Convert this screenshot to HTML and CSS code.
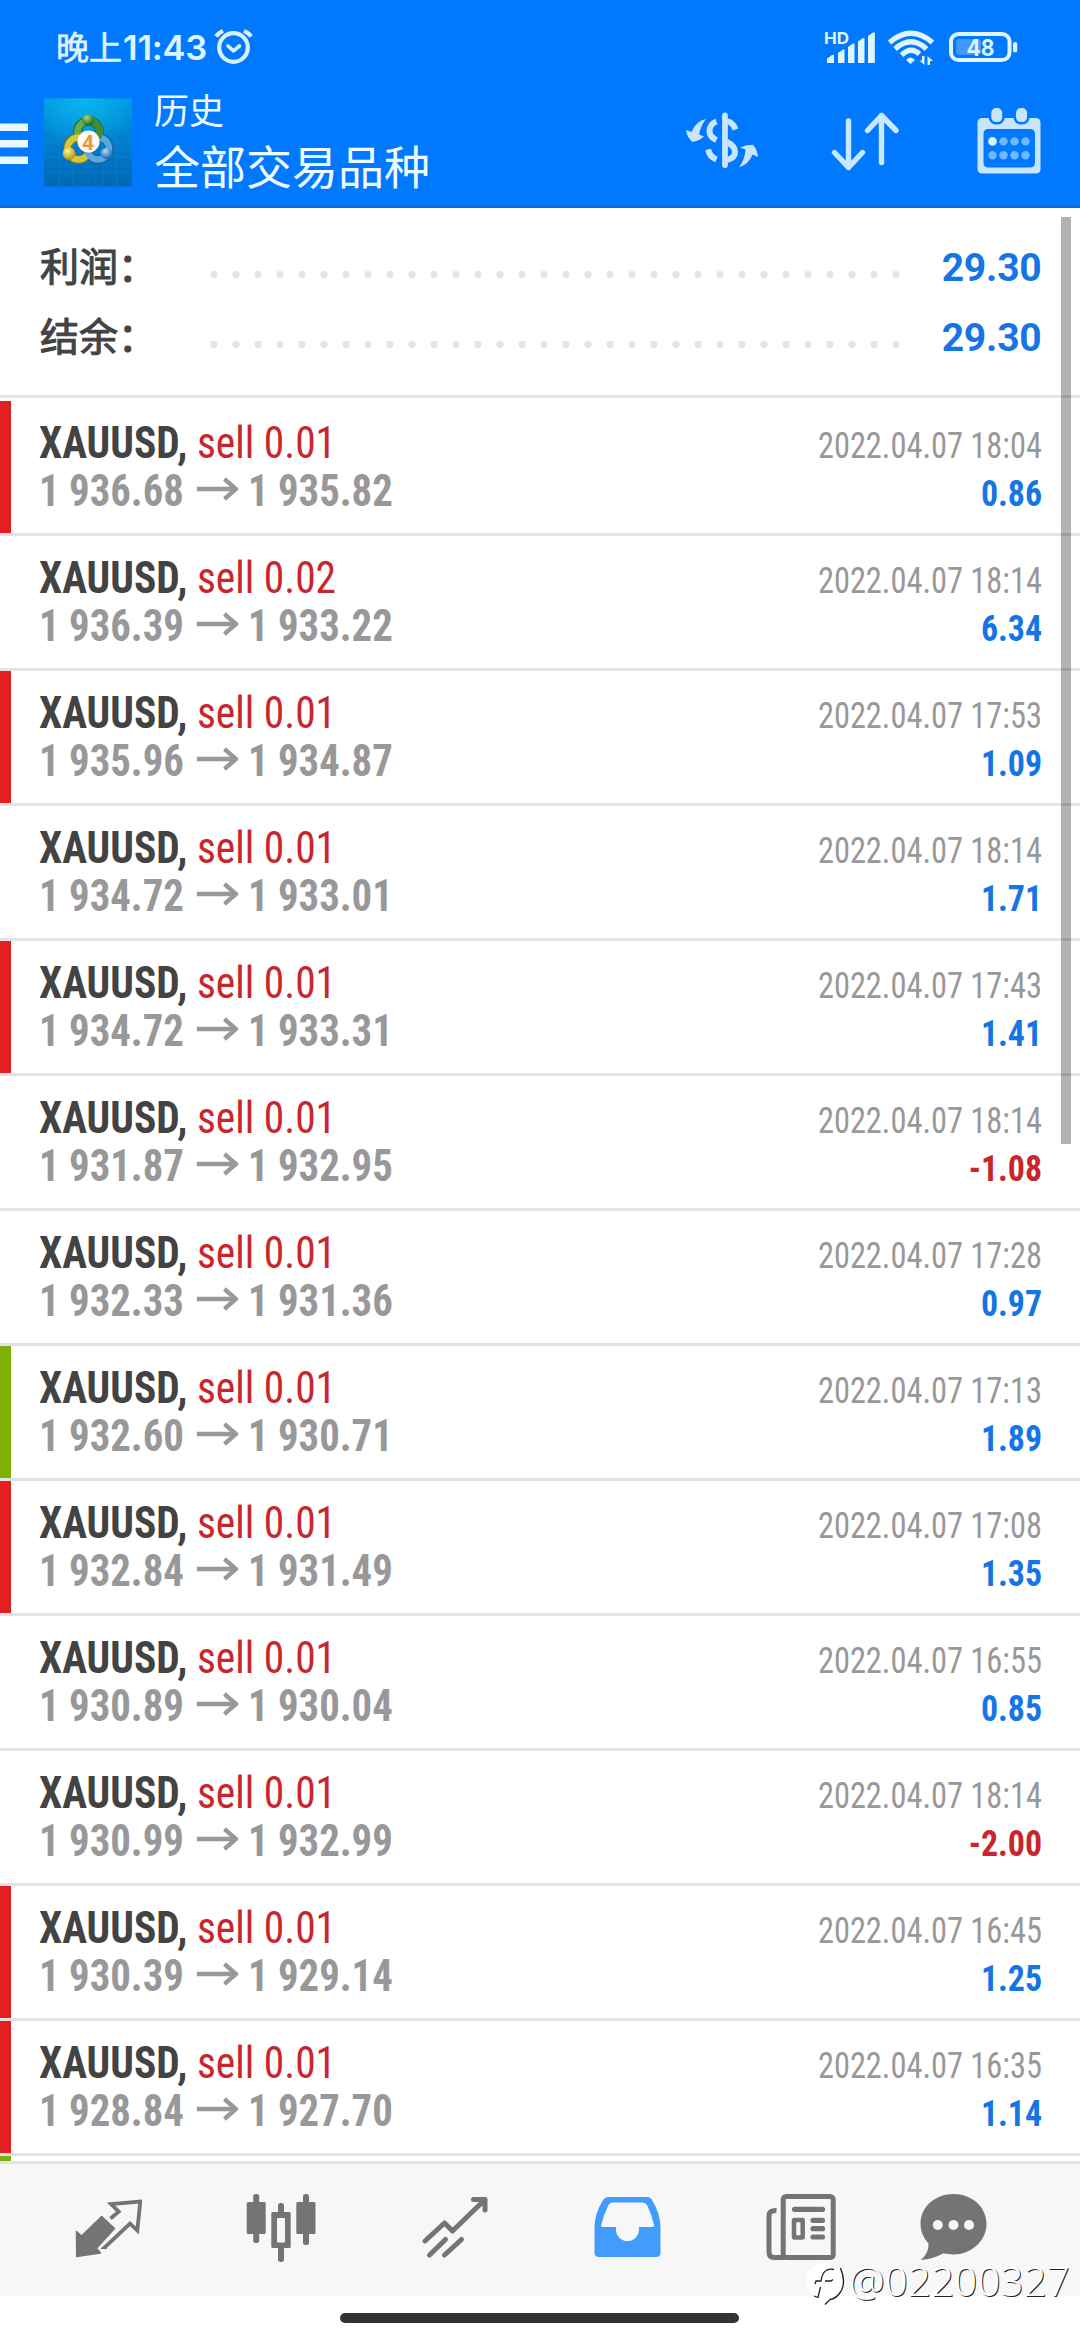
FILE: index.html
```html
<!DOCTYPE html>
<html lang="zh-CN">
<head>
<meta charset="utf-8">
<title>历史</title>
<link rel="stylesheet" href="styles.css">
</head>
<body>
<svg class="defs" width="0" height="0"><symbol id="arrow" viewBox="0 0 45 24"><path d="M0 12H42.500M30 2L42.500 12L30 22" fill="none" stroke="currentColor" stroke-width="4.6"/></symbol></svg>
<header class="header">
  <div class="status">
    <span class="clock">晚上<b>11:43</b></span>
    <svg class="alarm" width="42" height="40" viewBox="213 27 42 40" fill="none" stroke="#d8f1ff" stroke-width="4.2" stroke-linecap="round" stroke-linejoin="round"><circle cx="233.5" cy="47.5" r="14.3"/><path d="M228 46l5.5 4.800l6-4.800" stroke-width="3.600"/><path d="M216 36.500Q218.500 32.800 223 30.800M244 30.800Q248.500 32.800 251.200 36.500" stroke-linecap="butt"/></svg>
    <svg class="signals" width="196" height="40" viewBox="824 27 196 40" fill="#def4ff">
      <text class="hd" x="824" y="43.500" textLength="25" lengthAdjust="spacingAndGlyphs">HD</text>
      <path d="M827 63V58.500L832 55H834V63ZM838 63V53L843 49.500H844.500V63ZM848 63V47L853 43.500H854.500V63ZM858 63V41.500L863 38H864.500V63ZM868 63V36L873 32.500H874.800V63Z"/>
      <g fill="none" stroke="#def4ff" stroke-width="5.200"><path d="M889.500 42.500Q911 24 932.500 42.500"/><path d="M895 49Q911 34.500 926.500 49"/><path d="M901.500 55Q911 46 919.500 54"/></g>
      <path d="M906 60Q910.500 55 915 60L910.500 64ZM924.500 56V65L919.500 60.500H922V56ZM927.500 65V56L933 61H930V65Z"/>
      <rect x="951" y="34" width="58.500" height="26" rx="7.500" fill="none" stroke="#def4ff" stroke-width="4"/>
      <rect x="956" y="39" width="25" height="16" rx="3" fill="#3f97ff"/>
      <rect x="1013" y="42" width="4.200" height="10.500" rx="2"/>
      <text class="battery" x="966.500" y="56" textLength="28" lengthAdjust="spacingAndGlyphs">48</text>
    </svg>
  </div>
  <div class="toolbar">
    <svg width="28" height="114" viewBox="0 94 28 114" fill="#e8f8ff"><path d="M0 123.500H28V131H0ZM0 140H28V147.500H0ZM0 156.500H28V164H0Z"/></svg>
    <svg class="logo" width="88" height="114" viewBox="44 94 88 114">
      <defs><linearGradient id="sky" x1="0" y1="0" x2="0" y2="1"><stop offset="0" stop-color="#0098df"/><stop offset=".45" stop-color="#0080cf"/><stop offset="1" stop-color="#0067b8"/></linearGradient>
      <radialGradient id="glow" cx=".45" cy="0" r=".6"><stop offset="0" stop-color="#08b6ef"/><stop offset="1" stop-color="#08b6ef" stop-opacity="0"/></radialGradient>
      <radialGradient id="g" cx=".4" cy=".3" r=".7"><stop offset="0" stop-color="#a6dc70"/><stop offset="1" stop-color="#16681c"/></radialGradient>
      <radialGradient id="y" cx=".4" cy=".3" r=".7"><stop offset="0" stop-color="#fff29a"/><stop offset="1" stop-color="#b29208"/></radialGradient>
      <radialGradient id="b" cx=".4" cy=".3" r=".7"><stop offset="0" stop-color="#a6dcff"/><stop offset="1" stop-color="#1766ae"/></radialGradient></defs>
      <path fill="url(#sky)" d="M44 98.500H132V186.500H44Z"/><path fill="url(#glow)" d="M44 98.500H132V186.500H44Z"/>
      <path d="M59 98V187M73 98V187M88 98V187M103 98V187M117 98V187M44 113H132M44 128H132M44 143H132M44 157H132M44 172H132" stroke="#35a5e0" stroke-opacity=".18"/>
      <g fill="none"><circle cx="88.500" cy="132" r="11" stroke="#2c6d36" stroke-width="9"/><circle cx="78.500" cy="148.500" r="11" stroke="#6f7420" stroke-width="9"/><circle cx="98" cy="148.500" r="11" stroke="#1f5f94" stroke-width="9"/>
      <circle cx="88.500" cy="132" r="11" stroke="#62b24b" stroke-width="6.500"/><circle cx="78.500" cy="148.500" r="11" stroke="#d1c840" stroke-width="6.500"/><circle cx="98" cy="148.500" r="11" stroke="#58a9df" stroke-width="6.500"/><path d="M88.500 132m0-11a11 11 0 0 1 9.500 16.500" stroke="#3c8f35" stroke-width="6.500"/></g>
      <circle cx="88" cy="120" r="5.800" fill="url(#g)"/><circle cx="69" cy="153.500" r="6.300" fill="url(#y)"/><circle cx="106.500" cy="153.500" r="5.800" fill="url(#b)"/>
      <circle cx="88.500" cy="141.500" r="11" fill="#fff8f5"/><text class="four" x="88" y="149.500" text-anchor="middle">4</text>
    </svg>
    <div class="titles"><div class="sub">历史</div><div class="title">全部交易品种</div></div>
    <svg class="act1" width="76" height="114" viewBox="684 94 76 114" fill="#c9e4fd">
      <path d="M725 115.500V165" stroke="#c9e4fd" stroke-width="5.800" stroke-linecap="round"/>
      <path d="M716.500 121.500Q709.500 124 709.500 131Q709.500 137 716.500 140M727 121Q733.500 123 735.500 129.500M708 149.500Q709.500 156.500 716.500 159.500M727 142Q735 146 735 152Q735 158 727 160" fill="none" stroke="#c9e4fd" stroke-width="6"/>
      <path d="M686 130L691.500 132Q696 121 706 119Q700.500 126 699 134.500L704 136.500Q699 141 692.500 142Q687 137.500 686 130ZM740 147.500Q746 144.500 753 144.700Q757.500 150 758 157L752.500 154.500Q749 164 739 167.500Q745 159 745.500 149.500Z"/>
    </svg>
    <svg class="act2" width="70" height="114" viewBox="830 94 70 114" fill="none" stroke="#c9e8ff" stroke-width="5.400" stroke-linecap="round" stroke-linejoin="round"><path d="M848.500 121V167.500M834.500 152.500L848.500 167.500L862.500 152.500M881.500 162.500V115.500M867.500 130.500L881.500 115.500L896 130.500"/></svg>
    <svg class="act3" width="64" height="114" viewBox="976.500 94 64 114" fill="#c9e4fd">
      <path fill-rule="evenodd" d="M982 118H1035Q1040 118 1040 123V169Q1040 173.500 1035 173.500H982Q977 173.500 977 169V123Q977 118 982 118ZM988 129Q983 129 983 134V162.500Q983 167.500 988 167.500H1029Q1034.500 167.500 1034.500 162.500V134Q1034.500 129 1029 129Z"/>
      <g stroke="#0079ff" stroke-width="2.500"><rect x="989.500" y="106.800" width="13.500" height="16.500" rx="6"/><rect x="1014.300" y="106.800" width="13.500" height="16.500" rx="6"/></g>
      <circle cx="992" cy="141.400" r="4.300" fill="#d9f3ff"/><g fill="#70b8ff"><circle cx="1003" cy="141.400" r="4.200"/><circle cx="1014" cy="141.400" r="4.200"/><circle cx="1025" cy="141.400" r="4.200"/><circle cx="992" cy="155.300" r="4.200"/><circle cx="1003" cy="155.300" r="4.200"/><circle cx="1014" cy="155.300" r="4.200"/><circle cx="1025" cy="155.300" r="4.200"/></g>
    </svg>
  </div>
</header>
<main class="content">
  <section class="summary">
    <div class="total"><span class="label">利润：</span><i class="dots"></i><b>29.30</b></div>
    <div class="total"><span class="label">结余：</span><i class="dots"></i><b>29.30</b></div>
  </section>
  <section class="deals">
    <article class="deal sl"><div><p><b>XAUUSD,</b> <span class="side">sell 0.01</span></p><p class="price">1 936.68<svg><use href="#arrow"/></svg>1 935.82</p></div><div class="right"><time>2022.04.07 18:04</time><b>0.86</b></div></article>
    <article class="deal"><div><p><b>XAUUSD,</b> <span class="side">sell 0.02</span></p><p class="price">1 936.39<svg><use href="#arrow"/></svg>1 933.22</p></div><div class="right"><time>2022.04.07 18:14</time><b>6.34</b></div></article>
    <article class="deal sl"><div><p><b>XAUUSD,</b> <span class="side">sell 0.01</span></p><p class="price">1 935.96<svg><use href="#arrow"/></svg>1 934.87</p></div><div class="right"><time>2022.04.07 17:53</time><b>1.09</b></div></article>
    <article class="deal"><div><p><b>XAUUSD,</b> <span class="side">sell 0.01</span></p><p class="price">1 934.72<svg><use href="#arrow"/></svg>1 933.01</p></div><div class="right"><time>2022.04.07 18:14</time><b>1.71</b></div></article>
    <article class="deal sl"><div><p><b>XAUUSD,</b> <span class="side">sell 0.01</span></p><p class="price">1 934.72<svg><use href="#arrow"/></svg>1 933.31</p></div><div class="right"><time>2022.04.07 17:43</time><b>1.41</b></div></article>
    <article class="deal"><div><p><b>XAUUSD,</b> <span class="side">sell 0.01</span></p><p class="price">1 931.87<svg><use href="#arrow"/></svg>1 932.95</p></div><div class="right"><time>2022.04.07 18:14</time><b class="loss">-1.08</b></div></article>
    <article class="deal"><div><p><b>XAUUSD,</b> <span class="side">sell 0.01</span></p><p class="price">1 932.33<svg><use href="#arrow"/></svg>1 931.36</p></div><div class="right"><time>2022.04.07 17:28</time><b>0.97</b></div></article>
    <article class="deal tp"><div><p><b>XAUUSD,</b> <span class="side">sell 0.01</span></p><p class="price">1 932.60<svg><use href="#arrow"/></svg>1 930.71</p></div><div class="right"><time>2022.04.07 17:13</time><b>1.89</b></div></article>
    <article class="deal sl"><div><p><b>XAUUSD,</b> <span class="side">sell 0.01</span></p><p class="price">1 932.84<svg><use href="#arrow"/></svg>1 931.49</p></div><div class="right"><time>2022.04.07 17:08</time><b>1.35</b></div></article>
    <article class="deal"><div><p><b>XAUUSD,</b> <span class="side">sell 0.01</span></p><p class="price">1 930.89<svg><use href="#arrow"/></svg>1 930.04</p></div><div class="right"><time>2022.04.07 16:55</time><b>0.85</b></div></article>
    <article class="deal"><div><p><b>XAUUSD,</b> <span class="side">sell 0.01</span></p><p class="price">1 930.99<svg><use href="#arrow"/></svg>1 932.99</p></div><div class="right"><time>2022.04.07 18:14</time><b class="loss">-2.00</b></div></article>
    <article class="deal sl"><div><p><b>XAUUSD,</b> <span class="side">sell 0.01</span></p><p class="price">1 930.39<svg><use href="#arrow"/></svg>1 929.14</p></div><div class="right"><time>2022.04.07 16:45</time><b>1.25</b></div></article>
    <article class="deal sl"><div><p><b>XAUUSD,</b> <span class="side">sell 0.01</span></p><p class="price">1 928.84<svg><use href="#arrow"/></svg>1 927.70</p></div><div class="right"><time>2022.04.07 16:35</time><b>1.14</b></div></article>
    <article class="deal tp"></article>
  </section>
  <div class="scrollbar"></div>
</main>
<nav class="tabs">
  <svg width="67.5" viewBox="74 2164 67.5 132"><path fill="#747474" stroke="#747474" stroke-width="1.500" stroke-linejoin="round" d="M76.500 2231.500L81.500 2236L101.700 2216.500L114.500 2228.500L96.500 2248.200L100.500 2253L76.700 2256.500Z"/><path fill="none" stroke="#747474" stroke-width="3.800" d="M107 2247H105L130 2223.500L137.300 2230.500L140.300 2201.500L111 2204L118.700 2211.700L110.500 2218.500"/></svg>
  <svg width="70" viewBox="246 2164 70 132" fill="#747474"><rect x="246.700" y="2202" width="19" height="32" rx="1.500"/><rect x="253.200" y="2194" width="6" height="49" rx="2.500"/><rect x="296.300" y="2202" width="19.200" height="32" rx="1.500"/><rect x="303" y="2194" width="6" height="51" rx="2.500"/><rect x="278" y="2203" width="6" height="59" rx="2.500"/><rect x="271.300" y="2212" width="19.400" height="36" rx="1.500"/><rect x="277" y="2218" width="8" height="24.500" rx="1" fill="#f7f7f7"/></svg>
  <svg width="68" viewBox="420.5 2164 68 132" fill="none" stroke="#747474" stroke-width="5"><path stroke-linecap="round" stroke-linejoin="round" d="M424.500 2241L444 2223L452 2231L484 2200M473 2199.500H484.500V2210"/><path d="M429 2255L445 2239.500M444 2255L461 2239.500" stroke-linecap="round"/></svg>
  <svg width="68.5" viewBox="593 2164 68.5 132"><path fill="#419cfc" fill-rule="evenodd" d="M609 2197H647Q650.500 2197 652 2200Q660.500 2214 660.500 2227V2252.500Q660.500 2257 656 2257H599Q594.500 2257 594.500 2252.500V2227Q594.500 2214 603 2200Q605 2197 609 2197ZM612.500 2202.500Q609.500 2202.500 608.500 2205Q604 2214 601.200 2225Q600.700 2227 603 2227H616V2229.500A11.500 11.500 0 0 0 639 2229.500V2227H652Q654.500 2227 654 2225Q651.500 2214 647 2205Q645.500 2202.500 642.500 2202.500Z"/></svg>
  <svg width="70" viewBox="766 2164 70 132" fill="none" stroke="#747474"><rect x="783.200" y="2196.500" width="50" height="61" rx="3" stroke-width="5"/><path stroke-width="5" d="M776.500 2210.500Q769 2210 769 2216V2252Q769 2257.500 774 2257.500H784"/><path stroke-width="5.200" stroke-linecap="round" d="M794.500 2209.300H822.500M813 2220.300H822.500M813 2228.700H822.500M813 2237H822.500"/><rect x="794" y="2220" width="8.700" height="17.500" rx=".5" stroke-width="4.500"/></svg>
  <svg width="68" viewBox="919.500 2164 68 132"><path fill="#747474" d="M953 2194C971 2194 986 2206.500 986 2224C986 2241.500 970 2254.500 953 2254.500C949 2254.500 946 2254 943 2253.300Q932 2259.500 920.500 2260Q928.500 2253 928 2243.500Q920 2235 920 2224C920 2206.500 935 2194 953 2194Z"/><g fill="#f7f7f7"><circle cx="937.300" cy="2225" r="5"/><circle cx="953" cy="2225" r="5"/><circle cx="968.500" cy="2225" r="5"/></g></svg>
</nav>
<footer class="gesture"><i></i></footer>
<div class="watermark">
  <svg width="44" height="50" viewBox="804 2256 44 50"><circle cx="824" cy="2281" r="18" fill="#fff"/><g fill="none" stroke="#222" stroke-width="1.300"><path d="M840.500 2268Q847 2284 839.500 2293.500Q835 2299 830 2299.500L825 2304.500"/><path d="M834 2269.500Q823 2267 821 2281H816L815 2284M825 2281H831L833 2279.500M820.500 2287L818 2297.500L814 2296"/></g></svg>
  <span>@02200327</span>
</div>
</body>
</html>
```
FILE: styles.css
```css
* { box-sizing: border-box; margin: 0; }
body { position: relative; width: 1080px; height: 2340px; overflow: hidden; display: flex; flex-direction: column; background: #fff; font-family: Roboto, "Noto Sans CJK SC", sans-serif; }
svg { display: block; flex: none; }
.defs { position: absolute; }

.header { height: 208px; flex: none; background: #0079ff; color: #f0fbff; box-shadow: inset 0 -2px 1px #0a6ad4; }
.status { height: 94px; display: flex; align-items: center; padding: 0 60px 0 56px; }
.clock { width: 155px; padding-top: 2px; font-size: 33px; line-height: 40px; white-space: nowrap; color: #def4ff; -webkit-text-stroke: .7px #def4ff; }
.clock b { margin-left: 1px; font-family: Inter, sans-serif; font-size: 34.500px; font-weight: 600; letter-spacing: -.2px; -webkit-text-stroke: 0; }
.alarm { margin-left: 2px; }
.signals { margin-left: auto; }
.hd { font: 700 16.500px Inter, sans-serif; }
.battery { font: 700 23px Inter, sans-serif; }
.toolbar { height: 114px; display: flex; padding-right: 39.500px; }
.logo { margin-left: 16px; }
.four { font: 700 21px Roboto, sans-serif; fill: #e99745; }
.titles { margin-left: 22px; width: 300px; padding-top: 2px; }
.sub { font-size: 35px; line-height: 34px; }
.title { font-size: 46px; line-height: 77px; white-space: nowrap; }
.act1 { margin-left: auto; }
.act2 { margin-left: 70px; }
.act3 { margin-left: 76.500px; }

.content { position: relative; height: 1953px; flex: none; overflow: hidden; }
.summary { height: 190px; padding: 24px 38.500px 0 40px; border-bottom: 3px solid #e3e3e5; margin-bottom: 3px; }
.total { display: flex; height: 70px; line-height: 70px; font-size: 39px; color: #434343; }
.label { width: 162.500px; padding-top: 1px; white-space: nowrap; -webkit-text-stroke: 1.100px #434343; }
.dots { width: 704px; background: radial-gradient(circle at 11px 42.500px, #e4e4e6 3.300px, transparent 4px) 0 0 / 22px 70px repeat-x; }
.total b { margin-left: auto; padding-top: 1px; letter-spacing: -.2px; color: #1575e4; }

.deal { position: relative; height: 135px; display: flex; justify-content: space-between; padding: 18px 38px 0 39px; font: 44px/48px "Roboto Condensed", Roboto, sans-serif; color: #434343; border-bottom: 3px solid #e3e3e5; }
.deal::before { content: ""; position: absolute; left: 0; top: 0; width: 11px; height: 132px; }
.sl::before { background: #e31f20; }
.tp::before { background: #7eb108; }
.deal p { height: 48px; white-space: nowrap; transform: scaleX(.942); transform-origin: 0 0; }
.side { color: #c9252c; }
.deal .price { display: flex; font-weight: 700; color: #98989a; transform: scaleX(.927); }
.price svg { width: 45px; height: 24px; margin: 10px 10px 0 14px; }
.right { display: flex; flex-direction: column; align-items: flex-end; padding-top: 3px; font-size: 36px; }
.right time { color: #98989a; transform: scaleX(.9); transform-origin: 100% 0; }
.right b { color: #1575e4; transform: scaleX(.94); transform-origin: 100% 0; }
.right .loss { color: #c9252c; }
.scrollbar { position: absolute; left: 1061px; top: 9px; width: 10px; height: 927px; background: rgba(0, 0, 0, .3); }

.tabs { height: 135px; flex: none; display: flex; gap: 104.500px; padding-left: 74px; border-top: 3px solid #e3e3e5; background: #f7f7f7; }
.tabs svg { height: 132px; }
.tabs svg:last-child { margin-left: -21px; }
.gesture { height: 44px; padding: 17px 0 0 340px; }
.gesture i { display: block; width: 399px; height: 10px; border-radius: 5px; background: #333; }

.watermark { position: absolute; left: 804px; top: 2256px; display: flex; color: #fff; font: 300 40px/50px "Noto Sans", sans-serif; text-shadow: 1px 1px 0 #222; }
.watermark span { margin-left: 1px; letter-spacing: .3px; }
```
